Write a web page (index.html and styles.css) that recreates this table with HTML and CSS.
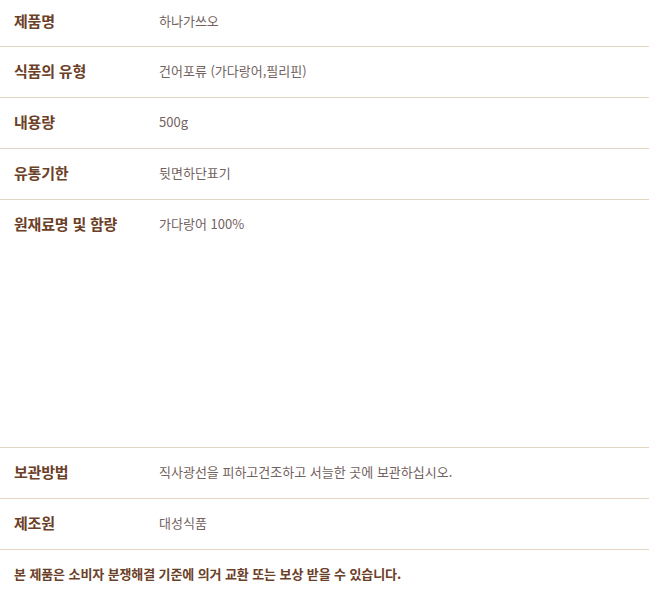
FILE: index.html
```html
<!DOCTYPE html>
<html lang="ko">
<head>
<meta charset="utf-8">
<link rel="stylesheet" href="styles.css">
</head>
<body>
<div class="info">
  <div class="row first"><div class="label">제품명</div><div class="value">하나가쓰오</div></div>
  <div class="row"><div class="label">식품의 유형</div><div class="value">건어포류 (가다랑어,필리핀)</div></div>
  <div class="row"><div class="label">내용량</div><div class="value">500g</div></div>
  <div class="row"><div class="label">유통기한</div><div class="value">뒷면하단표기</div></div>
  <div class="row tall"><div class="label">원재료명 및 함량</div><div class="value">가다랑어 100%</div></div>
  <div class="row"><div class="label">보관방법</div><div class="value">직사광선을 피하고건조하고 서늘한 곳에 보관하십시오.</div></div>
  <div class="row"><div class="label">제조원</div><div class="value">대성식품</div></div>
  <div class="row note">본 제품은 소비자 분쟁해결 기준에 의거 교환 또는 보상 받을 수 있습니다.</div>
</div>
</body>
</html>
```
FILE: styles.css
```css
html, body {
  margin: 0;
  padding: 0;
  background: #fff;
}
body {
  font-family: "Noto Sans CJK KR", "Noto Sans", sans-serif;
}
.info {
  display: flex;
  flex-direction: column;
}
.row {
  display: flex;
  align-items: flex-start;
  box-sizing: border-box;
  padding: 13px 0 0 14px;
  border-bottom: 1px solid #e2d5c3;
  height: 51px;
}
.row.first {
  height: 47px;
  padding-top: 10px;
}
.row.tall {
  height: 248px;
}
.label {
  width: 145px;
  flex: none;
  font-size: 15px;
  line-height: 22px;
  font-weight: 700;
  color: #6b4027;
  letter-spacing: -0.2px;
}
.value {
  font-size: 13px;
  line-height: 22px;
  color: #726260;
  letter-spacing: 0;
}
.note {
  font-size: 13px;
  line-height: 22px;
  font-weight: 700;
  color: #6b4027;
  letter-spacing: -0.1px;
  padding-top: 13px;
}
```
